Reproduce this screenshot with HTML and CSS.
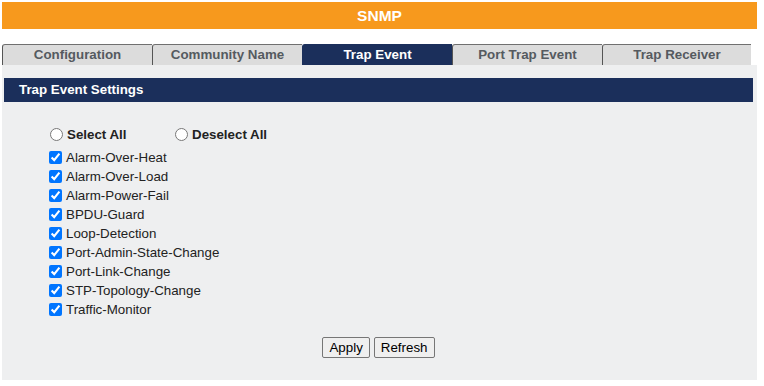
FILE: index.html
```html
<!DOCTYPE html>
<html>
<head>
<meta charset="utf-8">
<link rel="stylesheet" href="styles.css">
</head>
<body>
<div class="page">
  <div class="header">SNMP</div>
  <div class="tabs">
    <div class="tab">Configuration</div>
    <div class="tab">Community Name</div>
    <div class="tab active">Trap Event</div>
    <div class="tab">Port Trap Event</div>
    <div class="tab last">Trap Receiver</div>
  </div>
  <div class="panel">
    <div class="title">Trap Event Settings</div>
    <div class="selectors">
      <label class="sel"><input type="radio" name="sel">Select All</label>
      <label class="sel"><input type="radio" name="sel">Deselect All</label>
    </div>
    <div class="list">
      <label class="item"><input type="checkbox" checked>Alarm-Over-Heat</label>
      <label class="item"><input type="checkbox" checked>Alarm-Over-Load</label>
      <label class="item"><input type="checkbox" checked>Alarm-Power-Fail</label>
      <label class="item"><input type="checkbox" checked>BPDU-Guard</label>
      <label class="item"><input type="checkbox" checked>Loop-Detection</label>
      <label class="item"><input type="checkbox" checked>Port-Admin-State-Change</label>
      <label class="item"><input type="checkbox" checked>Port-Link-Change</label>
      <label class="item"><input type="checkbox" checked>STP-Topology-Change</label>
      <label class="item"><input type="checkbox" checked>Traffic-Monitor</label>
    </div>
    <div class="buttons">
      <button class="btn">Apply</button>
      <button class="btn">Refresh</button>
    </div>
  </div>
</div>
</body>
</html>
```
FILE: styles.css
```css
html, body {
  margin: 0;
  padding: 0;
  background: #ffffff;
}
body {
  font-family: "Liberation Sans", Arial, sans-serif;
  font-size: 13.33px;
  color: #222;
}
.page {
  padding: 2px 7px 0 2px;
}
.header {
  height: 27px;
  line-height: 27px;
  background: #f7991d;
  color: #ffffff;
  font-weight: bold;
  font-size: 15.5px;
  text-align: center;
}
.tabs {
  display: flex;
  margin-top: 15px;
  height: 21px;
  padding-right: 6px;
}
.tab {
  width: 149px;
  flex: none;
  height: 20px;
  line-height: 20px;
  text-align: center;
  font-weight: bold;
  font-size: 13.33px;
  color: #555a60;
  background: #dcdcdc;
  border-top: 1px solid #707070;
  border-left: 1px solid #555;
  border-top-left-radius: 3px;
}
.tab.last {
  flex: 1;
  width: auto;
}
.tab.active {
  background: #1b2f5b;
  color: #ffffff;
  border-color: #1b2f5b;
}
.panel {
  background: #eeeff0;
  height: 315px;
  padding: 13px 4px 0 2px;
  box-sizing: border-box;
  display: flex;
  flex-direction: column;
}
.title {
  background: #1b2f5b;
  color: #ffffff;
  font-weight: bold;
  font-size: 13.33px;
  height: 24px;
  line-height: 24px;
  padding-left: 15px;
}
.selectors {
  display: flex;
  margin-top: 22px;
  padding-left: 46px;
  height: 20px;
  align-items: center;
}
.sel {
  display: flex;
  align-items: center;
  font-weight: bold;
  font-size: 13.33px;
  width: 125px;
}
.sel input {
  margin: 0 4px 0 0;
  width: 13px;
  height: 13px;
}
.list {
  display: flex;
  flex-direction: column;
  padding-left: 45px;
  margin-top: 4px;
}
.item {
  display: flex;
  align-items: center;
  height: 19px;
  font-size: 13.33px;
}
.item input {
  margin: 0 4px 0 0;
  width: 13px;
  height: 13px;
}
.buttons {
  display: flex;
  justify-content: center;
  gap: 4px;
  margin-top: 18px;
}
.btn {
  font-family: "Liberation Sans", Arial, sans-serif;
  font-size: 13.33px;
  height: 21px;
  padding: 0 6px;
  background: #efefef;
  border: 1px solid #767676;
  border-radius: 2px;
  color: #000;
}
```
